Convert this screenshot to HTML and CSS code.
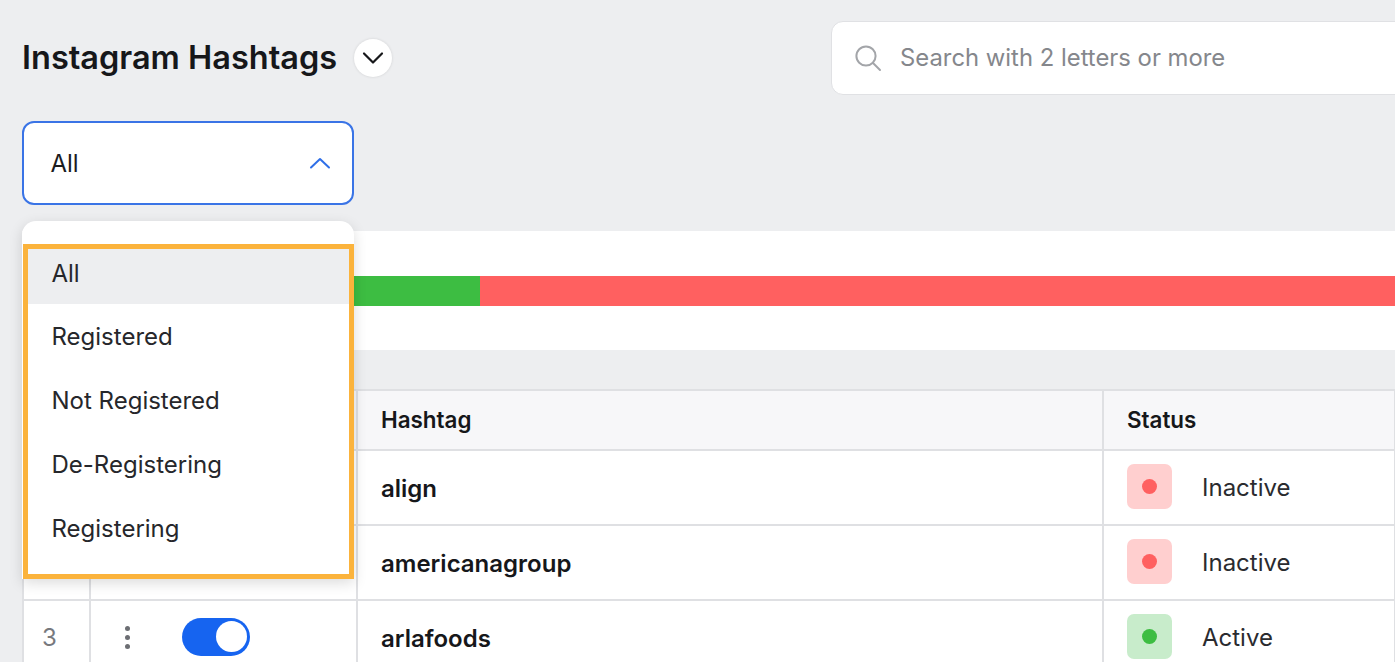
FILE: index.html
```html
<!DOCTYPE html>
<html lang="en">
<head>
<meta charset="utf-8">
<title>Instagram Hashtags</title>
<link rel="stylesheet" href="styles.css">
</head>
<body>
<div class="page">
  <header class="top">
    <div class="title-wrap">
      <h1 class="title">Instagram Hashtags</h1>
      <button class="round-btn" aria-label="More">
        <svg width="22" height="14" viewBox="0 0 22 14"><path d="M2 2.5 11 11.5l9-9" fill="none" stroke="#16171a" stroke-width="2.2" stroke-linecap="round" stroke-linejoin="round"/></svg>
      </button>
    </div>
    <div class="search">
      <svg class="search-icon" width="28" height="28" viewBox="0 0 28 28"><circle cx="12" cy="12" r="9.6" fill="none" stroke="#a3a5a9" stroke-width="2"/><path d="m19 19 7 7" fill="none" stroke="#a3a5a9" stroke-width="2" stroke-linecap="round"/></svg>
      <span class="search-text">Search with 2 letters or more</span>
    </div>
  </header>

  <div class="filter">
    <div class="select">
      <span>All</span>
      <svg width="22" height="14" viewBox="0 0 22 14"><path d="M2 11.5 11 3l9 8.5" fill="none" stroke="#2f6fe8" stroke-width="2" stroke-linecap="round" stroke-linejoin="round"/></svg>
    </div>
    <div class="menu">
      <ul class="menu-list">
        <li class="menu-item is-active">All</li>
        <li class="menu-item">Registered</li>
        <li class="menu-item">Not Registered</li>
        <li class="menu-item">De-Registering</li>
        <li class="menu-item">Registering</li>
      </ul>
    </div>
  </div>

  <section class="summary">
    <div class="bar"><div class="bar-green"></div><div class="bar-red"></div></div>
  </section>

  <div class="table">
    <div class="cell head"></div>
    <div class="cell head"></div>
    <div class="cell head strong">Hashtag</div>
    <div class="cell head strong">Status</div>

    <div class="cell"></div>
    <div class="cell"></div>
    <div class="cell name">align</div>
    <div class="cell status"><span class="badge red"><i></i></span>Inactive</div>

    <div class="cell"></div>
    <div class="cell"></div>
    <div class="cell name">americanagroup</div>
    <div class="cell status"><span class="badge red"><i></i></span>Inactive</div>

    <div class="cell num">3</div>
    <div class="cell actions">
      <span class="dots"><i></i><i></i><i></i></span>
      <span class="toggle"><i></i></span>
    </div>
    <div class="cell name">arlafoods</div>
    <div class="cell status"><span class="badge green"><i></i></span>Active</div>
  </div>
</div>
</body>
</html>
```
FILE: styles.css
```css
* { box-sizing: border-box; }
html, body { margin: 0; height: 100%; overflow: hidden; }
body { background: #edeef0; font-family: Inter, "Liberation Sans", sans-serif; color: #1b1c1f; }
.page { width: 1395px; height: 662px; overflow: hidden; padding: 21px 0 0 22px; }

.top { display: flex; align-items: flex-start; height: 74px; }
.title-wrap { flex: none; display: flex; align-items: center; width: 809px; height: 74px; }
.title { margin: 0; font-size: 32.5px; line-height: 74px; font-weight: 600; color: #16171a; }
.round-btn { width: 38px; height: 38px; margin-left: 17px; padding: 0; border: 0; border-radius: 50%; background: #fff; display: flex; align-items: center; justify-content: center; box-shadow: 0 0 3px rgba(0,0,0,.12); }
.search { flex: none; width: 620px; height: 74px; padding: 0 0 1px 22px; background: #fff; border: 1px solid #e0e1e4; border-radius: 12px; display: flex; align-items: center; }
.search-text { margin-left: 18px; font-size: 23.85px; color: #85878c; }
.search-icon { flex: none; }

.filter { position: relative; margin-top: 26px; width: 332px; }
.select { height: 84px; background: #fff; border: 2px solid #3a74e6; border-radius: 12px; display: flex; align-items: center; justify-content: space-between; padding: 0 21px 0 26.5px; font-size: 24px; }
.menu { position: absolute; z-index: 2; left: 0; top: 100px; width: 332px; height: 358px; padding-top: 23px; background: #fff; border-radius: 14px 14px 0 0; box-shadow: 0 4px 14px rgba(0,0,0,.14); }
.menu-list { list-style: none; margin: 0 0 0 1px; padding: 0; height: 335px; border: 5px solid #fbb33c; background: #fff; }
.menu-item { height: 64px; padding-left: 23.5px; display: flex; align-items: center; font-size: 24px; color: #26272b; }
.menu-item.is-active { height: 55px; padding-bottom: 7px; background: #edeef0; }

.summary { margin-top: 26px; height: 119px; background: #fff; padding-top: 45px; }
.bar { display: flex; height: 30px; }
.bar-green { width: 458px; background: #3dbd42; }
.bar-red { flex: 1; background: #ff6060; }

.table { margin-top: 39px; display: grid; grid-template-columns: 67px 267px 746px 292px; grid-template-rows: 60px 75px 75px 75px; background: #fff; border-top: 2px solid #dfe0e3; border-left: 2px solid #dfe0e3; }
.cell { display: flex; align-items: center; padding-left: 23px; border-right: 2px solid #dfe0e3; border-bottom: 2px solid #dfe0e3; font-size: 24px; }
.head { background: #f7f7f9; }
.strong { padding-bottom: 2px; font-size: 22.4px; font-weight: 600; color: #16171a; }
.name { padding-top: 2px; font-weight: 600; color: #16171a; }
.status { color: #2a2b2f; }
.badge { width: 45px; height: 45px; margin: 0 30px 2px 0; border-radius: 7px; display: flex; align-items: center; justify-content: center; }
.badge i { width: 15px; height: 15px; border-radius: 50%; }
.badge.red { background: #ffcfcf; }
.badge.red i { background: #ff6060; }
.badge.green { background: #c8eccb; }
.badge.green i { background: #3dbd42; }

.num { padding-left: 18px; color: #77797e; }
.actions { padding-left: 34px; }
.dots { display: flex; flex-direction: column; gap: 4px; margin-right: 52px; }
.dots i { width: 5px; height: 5px; border-radius: 50%; background: #6c6e73; }
.toggle { width: 68px; height: 38px; margin-bottom: 2px; border-radius: 19px; background: #1664f0; display: flex; align-items: center; justify-content: flex-end; padding-right: 3px; }
.toggle i { width: 31px; height: 31px; border-radius: 50%; background: #fff; }
```
